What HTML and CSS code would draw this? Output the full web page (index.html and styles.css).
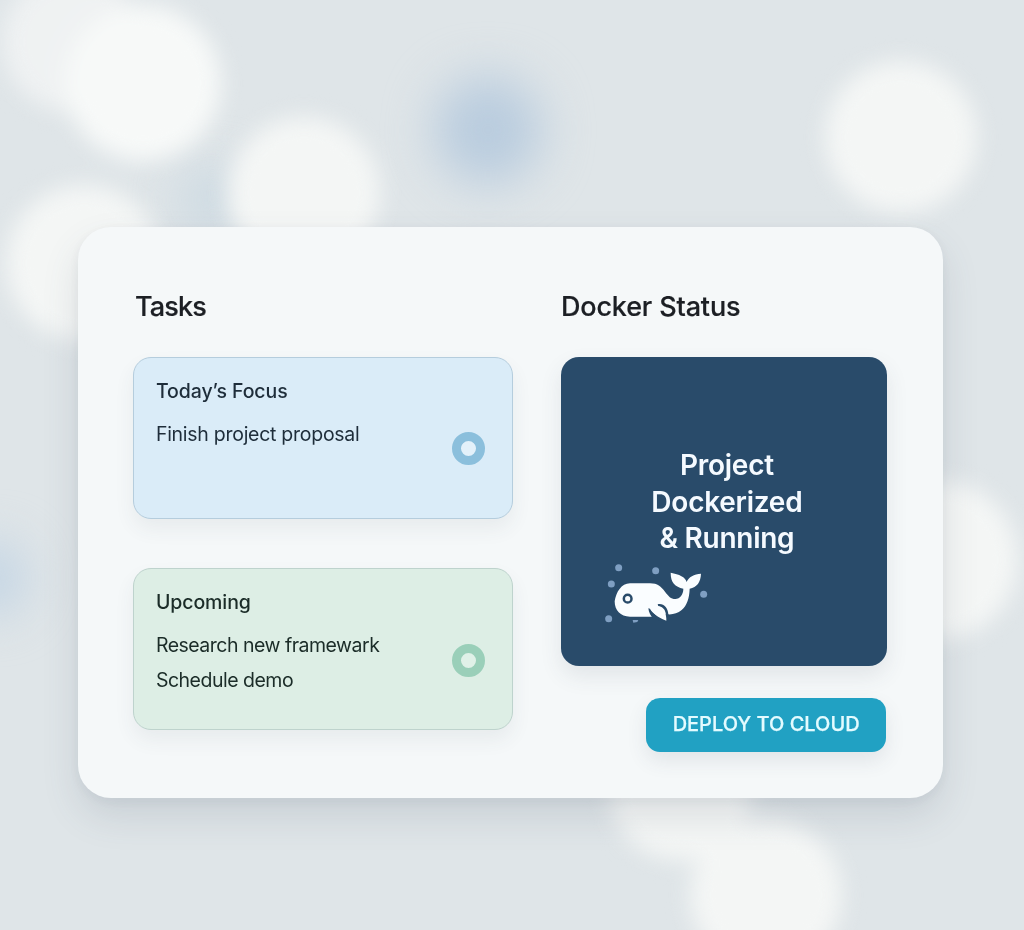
FILE: index.html
```html
<!DOCTYPE html>
<html lang="en">
<head>
<meta charset="utf-8">
<title>Tasks and Docker Status</title>
<link rel="stylesheet" href="styles.css">
</head>
<body>
<svg class="backdrop" viewBox="0 0 1024 930" aria-hidden="true">
  <defs>
    <filter id="soft" x="-50%" y="-50%" width="200%" height="200%" color-interpolation-filters="sRGB"><feGaussianBlur stdDeviation="11"/></filter>
    <filter id="haze" x="-100%" y="-100%" width="300%" height="300%" color-interpolation-filters="sRGB"><feGaussianBlur stdDeviation="24"/></filter>
  </defs>
  <g filter="url(#haze)">
    <circle cx="488" cy="130" r="54" fill="#b9ccde"/>
    <circle cx="-10" cy="578" r="36" fill="#c2d4e4"/>
    <circle cx="212" cy="200" r="32" fill="#cad8e1"/>
  </g>
  <g filter="url(#soft)" fill="#f4f6f5">
    <circle cx="72" cy="42" r="70" opacity=".75"/>
    <circle cx="143" cy="83" r="78" fill="#f7f9f8"/>
    <circle cx="304" cy="193" r="76"/>
    <circle cx="84" cy="263" r="78"/>
    <circle cx="901" cy="137" r="76"/>
    <circle cx="939" cy="560" r="79"/>
    <circle cx="680" cy="788" r="72"/>
    <circle cx="766" cy="895" r="76"/>
  </g>
</svg>
<main class="panel">
  <section class="tasks">
    <h1 class="heading">Tasks</h1>
    <article class="task task-focus">
      <div>
        <h2 class="task-title">Today’s Focus</h2>
        <p class="task-item">Finish project proposal</p>
      </div>
      <span class="ring"></span>
    </article>
    <article class="task task-upcoming">
      <div>
        <h2 class="task-title">Upcoming</h2>
        <p class="task-item">Research new framewark</p>
        <p class="task-item">Schedule demo</p>
      </div>
      <span class="ring"></span>
    </article>
  </section>
  <section class="docker">
    <h1 class="heading">Docker Status</h1>
    <div class="status">
      <p class="status-text">Project<br>Dockerized<br>&amp; Running</p>
      <svg class="whale" viewBox="45 36 315 195" aria-hidden="true">
        <g fill="#7f9fc2">
          <circle cx="86" cy="53" r="10.5"/><circle cx="197" cy="62" r="10.5"/><circle cx="64" cy="102" r="10.5"/><circle cx="341" cy="133" r="10.5"/><circle cx="56" cy="206" r="10.5"/>
          <path d="M128 210h17l-3 6-12 2z"/>
        </g>
        <path fill="#fafdff" d="M120 100H180C203 100 213 110 225 125C236 139 242 147 256 147C270 146 280 134 280 116C255 110 242 98 242 68C268 73 286 81 290 96C296 80 312 73 333 71C332 96 321 112 299 116C298 145 291 166 275 180C263 190 249 194 234 193L188 200H120C91 200 74 181 74 154C78 127 94 100 120 100Z"/>
        <path fill="#294b6a" d="M175 175C176 188 183 198 188 204L230 219L235 193C234 174 221 159 203 163L205 169C219 171 225 179 227 190L222 204C202 199 188 190 180 176Z"/>
        <path fill="#fafdff" d="M182 178C192 190 198 201 229 212C230 192 222 172 204 168L196 164Z"/>
        <circle cx="113" cy="146" r="11.5" fill="#fafdff" stroke="#294b6a" stroke-width="7.5"/>
      </svg>
    </div>
    <button class="deploy" type="button">DEPLOY TO CLOUD</button>
  </section>
</main>
</body>
</html>
```
FILE: styles.css
```css
* { box-sizing: border-box; }
body {
  margin: 0;
  height: 930px;
  padding: 227px 0 0 78.4px;
  overflow: hidden;
  background: #dfe5e8;
  color: #1c1f24;
  font-family: Inter, "Liberation Sans", sans-serif;
}
.backdrop {
  position: absolute;
  inset: 0;
  width: 1024px;
  height: 930px;
}
.panel {
  position: relative;
  display: grid;
  grid-template-columns: 379.5px 326.5px;
  column-gap: 48px;
  width: 864.2px;
  height: 570.5px;
  padding: 61.5px 55px 0 55px;
  border-radius: 33px;
  background: #f5f8f9;
  box-shadow: 0 18px 36px rgba(75, 88, 105, .15), 0 3px 14px rgba(75, 88, 105, .06);
}
.heading {
  margin: 0 0 32px 1.5px;
  font-size: 27px;
  line-height: 36px;
  font-weight: 500;
  letter-spacing: -.8px;
  -webkit-text-stroke: .2px;
}
.docker .heading { margin-left: 0; letter-spacing: -.15px; }
.task {
  display: flex;
  justify-content: space-between;
  align-items: flex-start;
  height: 162px;
  padding: 20px 26.5px 0 21.5px;
  border: 1.5px solid #b5cddd;
  border-radius: 18px;
  box-shadow: 0 10px 20px rgba(60, 70, 85, .07);
}
.task-focus { background: #daecf8; color: #1e2d3a; letter-spacing: -.27px; }
.task-upcoming { margin-top: 49.5px; background: #ddeee5; border-color: #bed3cd; color: #1b2c28; letter-spacing: -.5px; }
.task-title {
  margin: 0 0 13px;
  font-size: 19.5px;
  line-height: 26px;
  font-weight: 500;
  letter-spacing: -.08px;
}
.task-item {
  margin: 0;
  font-size: 19.5px;
  line-height: 34.5px;
}
.ring {
  width: 33px;
  height: 33px;
  margin-top: 54.5px;
  border: 9px solid #8bbfdc;
  border-radius: 50%;
  background: #e3f1fa;
}
.task-upcoming .ring { border-color: #9acfb9; background: #e0f1e8; }
.docker { display: flex; flex-direction: column; }
.status {
  height: 309px;
  padding: 90.5px 0 0 44px;
  border-radius: 18px;
  background: #294b6a;
  box-shadow: 0 10px 22px rgba(60, 70, 85, .1);
}
.status-text {
  width: 244px;
  margin: 0 0 5px;
  color: #f5faff;
  font-size: 28px;
  line-height: 36.5px;
  font-weight: 600;
  letter-spacing: -.25px;
  text-align: center;
}
.whale { display: block; width: 105px; height: 65px; }
.deploy {
  align-self: flex-end;
  width: 240.5px;
  height: 54px;
  margin: 32px 1px 0 0;
  padding: 0;
  border: 0;
  border-radius: 14px;
  background: #21a1c3;
  color: #e3fbff;
  font: 500 20px/53px Inter, "Liberation Sans", sans-serif;
  -webkit-text-stroke: .25px #e3fbff;
  box-shadow: 0 9px 20px rgba(60, 70, 85, .1);
}
```
